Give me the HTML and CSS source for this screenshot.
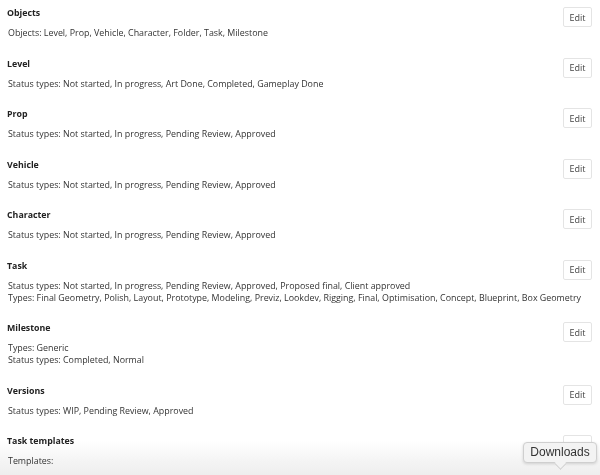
FILE: index.html
```html
<!DOCTYPE html>
<html lang="en">
<head>
    <meta charset="UTF-8">
    <title>Project settings</title>
    <link rel="stylesheet" href="styles.css">
</head>
<body>
    <div class="settings">
        <div class="section">
            <div class="section-info">
                <h3>Objects</h3>
                <p>Objects: Level, Prop, Vehicle, Character, Folder, Task, Milestone</p>
            </div>
            <button class="edit-button">Edit</button>
        </div>
        <div class="section">
            <div class="section-info">
                <h3>Level</h3>
                <p>Status types: Not started, In progress, Art Done, Completed, Gameplay Done</p>
            </div>
            <button class="edit-button">Edit</button>
        </div>
        <div class="section">
            <div class="section-info">
                <h3>Prop</h3>
                <p>Status types: Not started, In progress, Pending Review, Approved</p>
            </div>
            <button class="edit-button">Edit</button>
        </div>
        <div class="section">
            <div class="section-info">
                <h3>Vehicle</h3>
                <p>Status types: Not started, In progress, Pending Review, Approved</p>
            </div>
            <button class="edit-button">Edit</button>
        </div>
        <div class="section">
            <div class="section-info">
                <h3>Character</h3>
                <p>Status types: Not started, In progress, Pending Review, Approved</p>
            </div>
            <button class="edit-button">Edit</button>
        </div>
        <div class="section">
            <div class="section-info">
                <h3>Task</h3>
                <p>Status types: Not started, In progress, Pending Review, Approved, Proposed final, Client approved</p>
                <p>Types: Final Geometry, Polish, Layout, Prototype, Modeling, Previz, Lookdev, Rigging, Final, Optimisation, Concept, Blueprint, Box Geometry</p>
            </div>
            <button class="edit-button">Edit</button>
        </div>
        <div class="section">
            <div class="section-info">
                <h3>Milestone</h3>
                <p>Types: Generic</p>
                <p>Status types: Completed, Normal</p>
            </div>
            <button class="edit-button">Edit</button>
        </div>
        <div class="section">
            <div class="section-info">
                <h3>Versions</h3>
                <p>Status types: WIP, Pending Review, Approved</p>
            </div>
            <button class="edit-button">Edit</button>
        </div>
        <div class="section">
            <div class="section-info">
                <h3>Task templates</h3>
                <p>Templates:</p>
            </div>
            <button class="edit-button">Edit</button>
        </div>
    </div>

    <div class="bottom-fade"></div>
    <div class="tooltip">Downloads</div>
</body>
</html>
```

FILE: styles.css
```css
* {
    margin: 0;
    padding: 0;
    box-sizing: border-box;
}

html {
    background-color: #ffffff;
}

body {
    font-family: 'Open Sans', 'Liberation Sans', sans-serif;
    color: #333;
    overflow: hidden;
}

.settings {
    position: relative;
    z-index: 1;
    padding-top: 6px;
}

.section {
    display: flex;
    justify-content: space-between;
    align-items: flex-start;
    padding: 0 8px 17.5px 7px;
}

.section-info {
    flex: 1;
    min-width: 0;
}

.section-info h3 {
    font-size: 8.8px;
    font-weight: 700;
    line-height: 14px;
    color: #222;
    margin-bottom: 7px;
}

.section-info p {
    font-size: 8.9px;
    line-height: 12px;
    color: #333;
    padding-left: 1px;
    white-space: nowrap;
}

.edit-button {
    -webkit-appearance: none;
    appearance: none;
    margin-top: 1px;
    width: 29px;
    height: 20px;
    background: #ffffff;
    border: 1px solid #e4e4e4;
    border-radius: 2px;
    font-family: inherit;
    font-size: 9px;
    color: #444;
    flex-shrink: 0;
}

/* browser download bar fade, sits under the text */
.bottom-fade {
    position: fixed;
    left: 0;
    right: 0;
    bottom: 0;
    height: 34px;
    z-index: 0;
    background: linear-gradient(to bottom, #ffffff 0%, #f4f4f4 60%, #eeeeee 100%);
}

.tooltip {
    position: fixed;
    z-index: 2;
    left: 523px;
    top: 442px;
    width: 74px;
    height: 21px;
    background: #f3f3f3;
    border: 1px solid #cfcfcf;
    border-radius: 4px;
    box-shadow: 0 1px 3px rgba(0,0,0,0.15);
    font-family: 'Liberation Sans', sans-serif;
    font-size: 12px;
    line-height: 19px;
    text-align: center;
    color: #333;
}

.tooltip::after {
    content: '';
    position: absolute;
    left: 32px;
    bottom: -6px;
    width: 8px;
    height: 8px;
    background: #f3f3f3;
    border-right: 1px solid #cfcfcf;
    border-bottom: 1px solid #cfcfcf;
    transform: rotate(45deg);
}
```
